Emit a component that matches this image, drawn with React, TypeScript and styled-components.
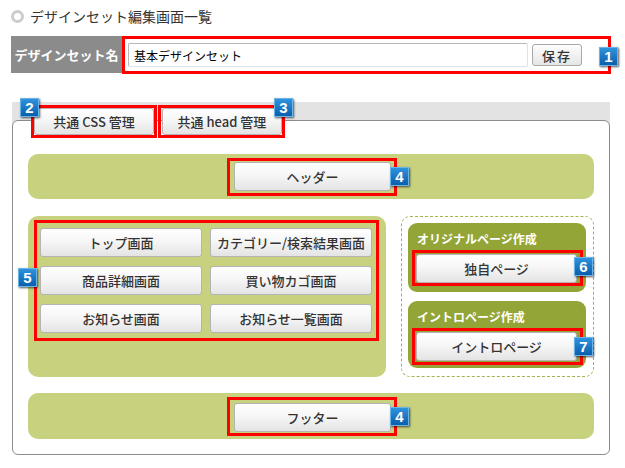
import React from "react";
import styled, { createGlobalStyle } from "styled-components";

const Global = createGlobalStyle`
  html, body { margin: 0; padding: 0; background: #fff; }
  body { font-family: "Noto Sans CJK JP", "Noto Sans", sans-serif; color: #333; }
  * { box-sizing: border-box; }
`;

const Page = styled.div`
  width: 625px;
  padding: 0 14px 0 11px;
`;

const TitleRow = styled.div`
  height: 32px;
  display: flex;
  align-items: center;
  gap: 6px;
  font-size: 14px;
  color: #333;
`;

const Ring = styled.span`
  width: 13px;
  height: 13px;
  border-radius: 50%;
  border: 3px solid #cccccc;
  background: #fff;
  flex: none;
`;

const NameRow = styled.div`
  margin-top: 4px;
  display: flex;
  align-items: stretch;
  height: 38px;
`;

const NameLabel = styled.div`
  width: 111px;
  height: 37px;
  background: #8b8b8b;
  color: #fff;
  font-weight: bold;
  font-size: 13px;
  display: flex;
  align-items: center;
  justify-content: center;
`;

const Mark = styled.div<{ $w?: number; $h?: number; $pad?: string }>`
  position: relative;
  border: 3px solid #ff0000;
  ${(p) => (p.$w ? `width: ${p.$w}px;` : "")}
  ${(p) => (p.$h ? `height: ${p.$h}px;` : "")}
  padding: ${(p) => p.$pad || "0"};
  display: flex;
`;

const NameBox = styled(Mark)`
  width: 489px;
  align-items: center;
  padding: 0 0 0 3px;
  gap: 4px;
`;

const TextInput = styled.input`
  width: 400px;
  height: 24px;
  border: 1px solid #b8b8b8;
  border-bottom-color: #dde3ea;
  border-right-color: #dde3ea;
  border-radius: 2px;
  font-family: inherit;
  font-size: 12px;
  padding: 0 5px;
  color: #000;
  outline: none;
`;

const SaveButton = styled.button`
  width: 50px;
  height: 22px;
  border: 1px solid #a8a8a8;
  border-radius: 3px;
  background: linear-gradient(#fdfdfd, #e6e6e6);
  font-family: inherit;
  font-size: 13px;
  font-weight: 500;
  color: #333;
  letter-spacing: 2px;
  padding: 0;
`;

const Badge = styled.span<{ $top: number; $left?: number; $right?: number }>`
  position: absolute;
  top: ${(p) => p.$top}px;
  ${(p) => (p.$left !== undefined ? `left: ${p.$left}px;` : "")}
  ${(p) => (p.$right !== undefined ? `right: ${p.$right}px;` : "")}
  width: 19px;
  height: 19px;
  background: linear-gradient(#2f93dc, #0a5fad);
  border: 1px solid #6bb4e8;
  box-shadow: 1px 1px 2px rgba(0, 0, 0, 0.65);
  color: #fff;
  font-family: "Liberation Sans", Arial, sans-serif;
  font-weight: bold;
  font-size: 15px;
  line-height: 17px;
  text-align: center;
  z-index: 3;
`;

const Section = styled.div`
  margin-top: 28px;
  margin-left: 1px;
  width: 598px;
  background: linear-gradient(#e3e3e3 0, #e3e3e3 24px, #fff 24px);
  padding-top: 18px;
`;

const Panel = styled.div`
  background: #fff;
  border: 1px solid #8c8c8c;
  border-radius: 6px;
  padding: 0 15px 15px 15px;
`;

const TabRow = styled.div`
  margin-top: -16px;
  padding-left: 3px;
  display: flex;
  gap: 1px;
  position: relative;
  z-index: 2;
`;

const Button = styled.button<{ $w?: number }>`
  ${(p) => (p.$w ? `width: ${p.$w}px;` : "width: 100%;")}
  height: 29px;
  border: 1px solid #b4b4b4;
  border-radius: 3px;
  background: linear-gradient(#ffffff 0%, #f6f6f6 45%, #e4e4e4 100%);
  font-family: inherit;
  font-size: 13px;
  font-weight: 500;
  color: #333;
  padding: 0;
  cursor: pointer;
  white-space: nowrap;
`;

const TabButton = styled(Button)`
  height: 27px;
`;

const Band = styled.div<{ $h?: number }>`
  margin-top: 16px;
  height: ${(p) => p.$h || 45}px;
  border-radius: 10px;
  background: #c8d17e;
  display: flex;
  align-items: center;
  justify-content: center;
  padding-left: 2px;
`;

const Middle = styled.div`
  margin-top: 17px;
  display: flex;
  gap: 15px;
  height: 161px;
`;

const PageBlock = styled.div`
  width: 358px;
  background: #c8d17e;
  border-radius: 10px;
  padding: 4px 7px 0 6px;
`;

const Grid = styled.div`
  display: grid;
  grid-template-columns: 162px 162px;
  grid-auto-rows: 29px;
  column-gap: 8px;
  row-gap: 9px;
  padding: 5px 3px;
`;

const Dashed = styled.div`
  flex: 1;
  border: 1px dashed #a4b04c;
  border-radius: 9px;
  padding: 6px 7px 7px 6px;
  display: flex;
  flex-direction: column;
  gap: 9px;
`;

const Extra = styled.div<{ $h: number }>`
  height: ${(p) => p.$h}px;
  background: #94a537;
  border-radius: 9px;
  padding: 7px 3px 0 4px;
`;

const ExtraTitle = styled.div`
  color: #fff;
  font-weight: bold;
  font-size: 12px;
  line-height: 18px;
  padding-left: 5px;
  margin-bottom: 2px;
`;

const items = [
  "トップ画面",
  "カテゴリー/検索結果画面",
  "商品詳細画面",
  "買い物カゴ画面",
  "お知らせ画面",
  "お知らせ一覧画面",
];

export default function App() {
  return (
    <Page>
      <Global />
      <TitleRow>
        <Ring />
        <span>デザインセット編集画面一覧</span>
      </TitleRow>
      <NameRow>
        <NameLabel>デザインセット名</NameLabel>
        <NameBox>
          <TextInput defaultValue="基本デザインセット" />
          <SaveButton>保存</SaveButton>
          <Badge $top={8} $right={-10}>1</Badge>
        </NameBox>
      </NameRow>
      <Section>
        <Panel>
          <TabRow>
            <Mark $w={126}>
              <TabButton $w={120}>共通 CSS 管理</TabButton>
              <Badge $top={-10} $left={-14}>2</Badge>
            </Mark>
            <Mark $w={127} $pad="0 0 0 1px">
              <TabButton $w={120}>共通 head 管理</TabButton>
              <Badge $top={-10} $right={-11}>3</Badge>
            </Mark>
          </TabRow>
          <Band>
            <Mark $w={170} $h={38} $pad="1px 3px 1px 4px">
              <Button>ヘッダー</Button>
              <Badge $top={6} $right={-15}>4</Badge>
            </Mark>
          </Band>
          <Middle>
            <PageBlock>
              <Mark $w={345}>
                <Grid>
                  {items.map((t) => (
                    <Button key={t}>{t}</Button>
                  ))}
                </Grid>
                <Badge $top={45} $left={-19}>5</Badge>
              </Mark>
            </PageBlock>
            <Dashed>
              <Extra $h={69}>
                <ExtraTitle>オリジナルページ作成</ExtraTitle>
                <Mark $h={36} $pad="1px 3px 1px 1px">
                  <Button>独自ページ</Button>
                  <Badge $top={4} $right={-13}>6</Badge>
                </Mark>
              </Extra>
              <Extra $h={67}>
                <ExtraTitle>イントロページ作成</ExtraTitle>
                <Mark $h={37} $pad="1px 3px 2px 1px">
                  <Button>イントロページ</Button>
                  <Badge $top={6} $right={-13}>7</Badge>
                </Mark>
              </Extra>
            </Dashed>
          </Middle>
          <Band $h={46}>
            <Mark $w={170} $h={39} $pad="3px 3px 1px 4px">
              <Button>フッター</Button>
              <Badge $top={7} $right={-15}>4</Badge>
            </Mark>
          </Band>
        </Panel>
      </Section>
    </Page>
  );
}
